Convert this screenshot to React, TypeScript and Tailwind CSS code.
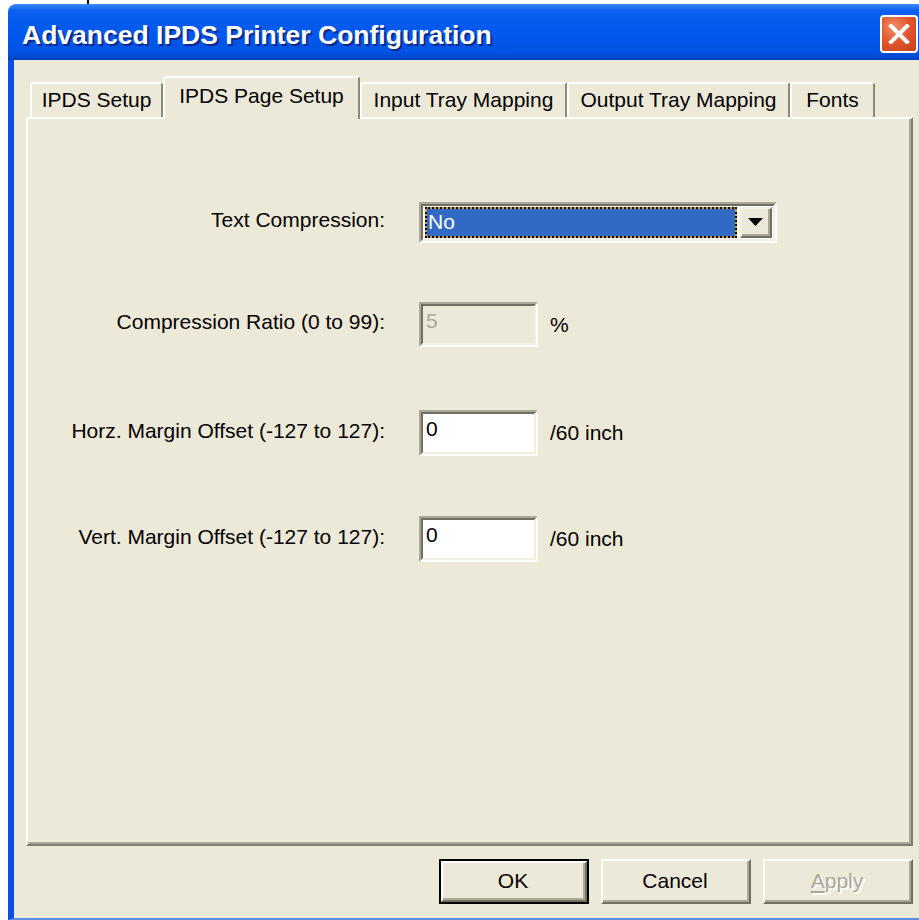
import type { ReactNode } from "react";

const font = "font-['Liberation_Sans',Arial,sans-serif]";

type TabDef = { label: string; width: string; active?: boolean };

const tabs: TabDef[] = [
  { label: "IPDS Setup", width: "w-[133px]" },
  { label: "IPDS Page Setup", width: "w-[197px]", active: true },
  { label: "Input Tray Mapping", width: "w-[207px]" },
  { label: "Output Tray Mapping", width: "w-[223px]" },
  { label: "Fonts", width: "w-[85px]" },
];

function Tab({ label, width, active }: TabDef) {
  if (active) {
    return (
      <div
        className={`${width} relative z-10 -mb-[2px] flex h-[43px] justify-center rounded-t-[3px] border-t-2 border-l-2 border-r-2 border-t-white border-l-white border-r-[#8c897d] bg-[#ece9d8] pt-[6px]`}
      >
        <span className="leading-[24px]">{label}</span>
      </div>
    );
  }
  return (
    <div
      className={`${width} flex h-[35px] justify-center rounded-t-[3px] border-t-2 border-l-2 border-r-2 border-t-white border-l-white border-r-[#8c897d] bg-[#ece9d8] pt-[4px]`}
    >
      <span className="leading-[24px]">{label}</span>
    </div>
  );
}

function Sunken({ className, children }: { className: string; children?: ReactNode }) {
  return (
    <div
      className={`border-2 border-t-[#aca899] border-l-[#aca899] border-b-white border-r-white ${className}`}
    >
      <div className="h-full border-2 border-t-[#716f64] border-l-[#716f64] border-b-[#f1efe2] border-r-[#f1efe2]">
        {children}
      </div>
    </div>
  );
}

function Row({
  label,
  children,
  className,
}: {
  label: string;
  children: ReactNode;
  className?: string;
}) {
  return (
    <div className={`flex items-center ${className ?? ""}`}>
      <div className="w-[357px] pb-[5px] text-right leading-[24px]">{label}</div>
      <div className="ml-[34px] flex items-center">{children}</div>
    </div>
  );
}

function TextField({ value, disabled, height }: { value: string; disabled?: boolean; height: string }) {
  return (
    <Sunken className={`w-[119px] ${height} ${disabled ? "bg-[#ece9d8]" : "bg-white"}`}>
      <div
        className={`pl-[3px] pt-[3px] leading-[24px] ${disabled ? "text-[#aca899]" : "text-black"}`}
      >
        {value}
      </div>
    </Sunken>
  );
}

function Button({
  children,
  primary,
}: {
  children: ReactNode;
  primary?: boolean;
}) {
  return (
    <div
      className={`h-[45px] w-[150px] ${primary ? "border-2 border-black" : ""}`}
    >
      <div className="h-full border-2 border-t-white border-l-white border-b-[#716f64] border-r-[#716f64]">
        <div className="flex h-full items-center justify-center border-b-2 border-r-2 border-b-[#aca899] border-r-[#aca899] leading-[24px]">
          {children}
        </div>
      </div>
    </div>
  );
}

export default function App() {
  return (
    <div className={`relative h-[920px] w-[919px] overflow-hidden bg-white pl-[8px] pt-[4px] text-[21px] text-black ${font}`}>
      {/* stray caret mark above the window */}
      <div className="absolute left-[87px] top-0 h-[4px] w-[2px] bg-black" />

      <div className="flex h-[916px] w-[911px] flex-col overflow-hidden rounded-tl-[8px]">
        {/* title bar */}
        <div className="flex h-[56px] shrink-0 items-start bg-[linear-gradient(180deg,#3d8cf8_0%,#0a5ff0_12%,#0058ee_50%,#0053e4_85%,#0042c4_100%)] pl-[14px]">
          <div className="mt-[16px] flex-1 text-[26.5px] font-bold leading-[30px] text-white [text-shadow:2px_2px_0_#0a2a8c]">
            Advanced IPDS Printer Configuration
          </div>
          <div className="mt-[11px] mr-[1px] flex h-[38px] w-[38px] items-center justify-center rounded-[4px] border-2 border-white bg-[radial-gradient(circle_at_35%_30%,#f0906a_0%,#e2582f_45%,#c4401a_100%)]">
            <svg width="22" height="20" viewBox="0 0 22 20">
              <path d="M3 2 L19 18 M19 2 L3 18" stroke="white" strokeWidth="4" strokeLinecap="square" />
            </svg>
          </div>
        </div>

        {/* window body */}
        <div className="flex flex-1 flex-col border-b-2 border-l-[6px] border-b-[#5d8de6] border-l-[#0c4fe4] bg-[#ece9d8] pt-[16px]">
          <div className="ml-[16px] flex h-[41px] items-end">
            {tabs.map((t) => (
              <Tab key={t.label} {...t} />
            ))}
          </div>

          <div className="ml-[12px] h-[729px] w-[887px] border-2 border-t-white border-l-white border-b-[#7f7d72] border-r-[#7f7d72] pt-[83px] shadow-[inset_-2px_-2px_0_#aca899]">
            <Row label="Text Compression:">
              <Sunken className="h-[41px] w-[358px] bg-white">
                <div className="flex h-full p-[1px]">
                  <div className="ml-[1px] flex-1 bg-[#d89d3a]">
                    <div className="h-full border-2 border-dotted border-black bg-[#316ac5] bg-clip-padding pl-[1px] leading-[26px] text-white">
                      No
                    </div>
                  </div>
                  <div className="ml-[3px] w-[32px] border-2 border-t-[#f1efe2] border-l-[#f1efe2] border-b-[#716f64] border-r-[#716f64] bg-[#ece9d8]">
                    <div className="flex h-full items-center justify-center border-b-2 border-r-2 border-b-[#aca899] border-r-[#aca899]">
                      <svg width="15" height="8" viewBox="0 0 15 8">
                        <polygon points="0,0 15,0 7.5,8" fill="black" />
                      </svg>
                    </div>
                  </div>
                </div>
              </Sunken>
            </Row>

            <Row label="Compression Ratio (0 to 99):" className="mt-[59px]">
              <TextField value="5" disabled height="h-[45px]" />
              <span className="ml-[12px] leading-[24px]">%</span>
            </Row>

            <Row label="Horz. Margin Offset (-127 to 127):" className="mt-[63px]">
              <TextField value="0" height="h-[46px]" />
              <span className="ml-[12px] leading-[24px]">/60 inch</span>
            </Row>

            <Row label="Vert. Margin Offset (-127 to 127):" className="mt-[60px]">
              <TextField value="0" height="h-[46px]" />
              <span className="ml-[12px] leading-[24px]">/60 inch</span>
            </Row>
          </div>

          <div className="ml-[12px] mt-[13px] flex w-[887px] justify-end gap-[12px]">
            <Button primary>OK</Button>
            <Button>Cancel</Button>
            <Button>
              <span className="text-[#aca899] [text-shadow:2px_2px_0_#ffffff]">
                <span className="underline underline-offset-[3px]">A</span>pply
              </span>
            </Button>
          </div>
        </div>
      </div>
    </div>
  );
}
